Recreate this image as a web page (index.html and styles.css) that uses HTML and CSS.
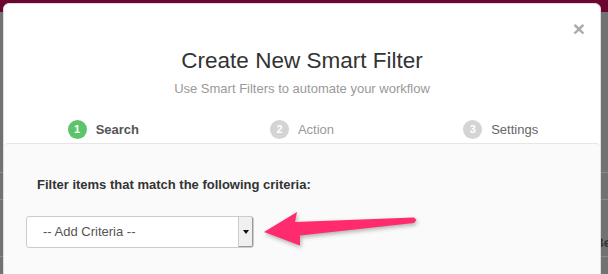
FILE: index.html
```html
<!DOCTYPE html>
<html lang="en">
<head>
    <meta charset="UTF-8">
    <meta name="viewport" content="width=device-width, initial-scale=1.0">
    <title>Create New Smart Filter</title>
    <link rel="stylesheet" href="styles.css">
</head>
<body>
    <div class="topbar"></div>
    <div class="page">
        <div class="page-row row-a"></div>
        <div class="page-row row-b"></div>
        <div class="page-row row-c"><span class="peek">Be</span></div>
    </div>

    <div class="modal">
        <div class="modal-header">
            <span class="close">&times;</span>
            <h1>Create New Smart Filter</h1>
            <p class="subtitle">Use Smart Filters to automate your workflow</p>
            <div class="steps">
                <div class="step active"><span class="num">1</span><span class="label">Search</span></div>
                <div class="step"><span class="num">2</span><span class="label">Action</span></div>
                <div class="step step-last"><span class="num">3</span><span class="label">Settings</span></div>
            </div>
        </div>
        <div class="modal-body">
            <p class="criteria-label">Filter items that match the following criteria:</p>
            <div class="select">
                <span class="select-text">-- Add Criteria --</span>
                <span class="select-btn"><span class="caret"></span></span>
            </div>
        </div>
    </div>

    <!-- annotation arrow pointing at the dropdown -->
    <svg class="arrow" width="170" height="50" viewBox="0 0 170 50">
        <polygon points="9,27 42,7 40,17 159,12.5 161.5,15 159,18 45,30.5 45,40.5" fill="#ff2b6c"/>
    </svg>
</body>
</html>
```

FILE: styles.css
```css
* {
    margin: 0;
    padding: 0;
    box-sizing: border-box;
}
body {
    font-family: "Liberation Sans", Arial, sans-serif;
    background-color: #727272;
    width: 608px;
    height: 274px;
    overflow: hidden;
    position: relative;
}
.topbar {
    height: 12px;
    background-color: #6c0631;
}
.page-row {
    border-bottom: 1px solid #8a8a8a;
}
.row-a {
    height: 161px;
}
.row-b {
    height: 27px;
}
.row-c {
    height: 57px;
    text-align: right;
    padding-top: 33px;
}
.peek {
    font-size: 13px;
    font-weight: bold;
    color: #333;
    margin-right: -3px;
}

.modal {
    position: absolute;
    left: 3px;
    top: 3px;
    width: 598px;
    height: 290px;
    background: #fff;
    border: 1px solid #ddd;
    border-radius: 6px;
}
.modal-header {
    position: relative;
    padding-top: 44px;
    text-align: center;
}
.close {
    position: absolute;
    top: 14px;
    right: 15px;
    font-size: 21px;
    font-weight: bold;
    color: #aaa;
    line-height: 1;
}
h1 {
    font-size: 22.5px;
    font-weight: normal;
    line-height: 26px;
    color: #333;
}
.subtitle {
    font-size: 13px;
    line-height: 18px;
    color: #999;
    margin-top: 6px;
}
.steps {
    display: flex;
    margin-top: 21px;
    padding-bottom: 4px;
}
.step {
    flex: 1;
    display: flex;
    align-items: center;
    justify-content: center;
    height: 20px;
    font-size: 13px;
    color: #999;
}
.num {
    width: 19px;
    height: 19px;
    border-radius: 50%;
    background: #d4d4d4;
    color: #fff;
    font-size: 11px;
    font-weight: bold;
    line-height: 19px;
    text-align: center;
    margin-right: 9px;
}
.step.active .num {
    background: #5cc46b;
}
.step.active .label {
    font-weight: bold;
    color: #555;
}
.step-last .label {
    color: #666;
}

.modal-body {
    background: #fafafa;
    border-top: 1px solid #e6e6e6;
    border-radius: 4px 4px 0 0;
    height: 200px;
    padding: 32px 22px 0;
}
.criteria-label {
    font-size: 13px;
    font-weight: bold;
    line-height: 18px;
    color: #333;
    padding-left: 11px;
}
.select {
    display: flex;
    width: 228px;
    height: 32px;
    margin-top: 22px;
    background: #fff;
    border: 1px solid #ccc;
    border-radius: 3px;
}
.select-text {
    flex: 1;
    font-size: 13px;
    line-height: 30px;
    color: #555;
    padding-left: 16px;
}
.select-btn {
    width: 15px;
    display: flex;
    align-items: center;
    justify-content: center;
    background: #f0f0f0;
    border-left: 1px solid #ccc;
    border-right: 1px solid #999;
    border-bottom: 1px solid #999;
    border-radius: 0 2px 2px 0;
}
.caret {
    width: 0;
    height: 0;
    border-left: 3px solid transparent;
    border-right: 3px solid transparent;
    border-top: 4px solid #111;
}

.arrow {
    position: absolute;
    left: 255px;
    top: 205px;
    filter: drop-shadow(1px 2px 2px rgba(0, 0, 0, 0.3));
}
```
